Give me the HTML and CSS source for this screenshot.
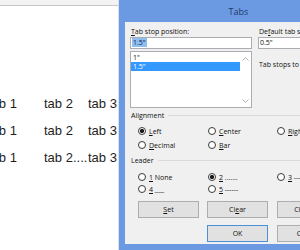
FILE: index.html
```html
<!DOCTYPE html>
<html>
<head>
<meta charset="utf-8">
<link rel="stylesheet" href="styles.css">
</head>
<body>
<div class="screen">
  <div class="doc">
    <div class="ruler"></div>
    <div class="lines">
      <div class="line"><span>tab 1</span><span>tab 2</span><span>tab 3</span></div>
      <div class="line"><span>tab 1</span><span>tab 2</span><span>tab 3</span></div>
      <div class="line"><span>tab 1</span><span>tab 2....</span><span>tab 3<span class="caret"></span></span></div>
    </div>
  </div>
  <div class="dialog">
    <div class="titlebar">Tabs</div>
    <div class="panel">
      <div class="top">
        <div class="col-left">
          <div class="label"><u>T</u>ab stop position:</div>
          <div class="input"><span class="sel">1.5"</span></div>
          <div class="listbox">
            <div class="list">
              <div class="item">1"</div>
              <div class="item active">1.5"</div>
            </div>
            <div class="scroll">
              <svg width="7" height="4" viewBox="0 0 7 4"><path d="M0.5 3.5 L3.5 0.5 L6.5 3.5" fill="none" stroke="#b0b0b0" stroke-width="1"/></svg>
              <svg width="7" height="4" viewBox="0 0 7 4"><path d="M0.5 0.5 L3.5 3.5 L6.5 0.5" fill="none" stroke="#b0b0b0" stroke-width="1"/></svg>
            </div>
          </div>
        </div>
        <div class="col-right">
          <div class="label">De<u>f</u>ault tab stops:</div>
          <div class="input">0.5"</div>
          <div class="note">Tab stops to be cleared:</div>
        </div>
      </div>
      <div class="group-title">Alignment</div>
      <div class="radios align">
        <div class="radio"><span class="dot on"></span><span><u>L</u>eft</span></div>
        <div class="radio"><span class="dot"></span><span><u>C</u>enter</span></div>
        <div class="radio"><span class="dot"></span><span><u>R</u>ight</span></div>
        <div class="radio"><span class="dot"></span><span><u>D</u>ecimal</span></div>
        <div class="radio"><span class="dot"></span><span><u>B</u>ar</span></div>
      </div>
      <div class="group-title leader-title">Leader</div>
      <div class="radios leader">
        <div class="radio"><span class="dot"></span><span><u>1</u> None</span></div>
        <div class="radio"><span class="dot on"></span><span><u>2</u> .......</span></div>
        <div class="radio"><span class="dot"></span><span><u>3</u> -------</span></div>
        <div class="radio"><span class="dot"></span><span><u>4</u> ___</span></div>
        <div class="radio"><span class="dot"></span><span><u>5</u> ------</span></div>
      </div>
      <div class="buttons">
        <div class="btn"><span><u>S</u>et</span></div>
        <div class="btn"><span>Cl<u>e</u>ar</span></div>
        <div class="btn"><span>Clear <u>A</u>ll</span></div>
        <div class="spacer"></div>
        <div class="btn default"><span>OK</span></div>
        <div class="btn"><span>Cancel</span></div>
      </div>
    </div>
  </div>
</div>
</body>
</html>
```
FILE: styles.css
```css
* { box-sizing: border-box; margin: 0; padding: 0; }
html, body { width: 300px; height: 250px; overflow: hidden; background: #fff; }
.screen { display: flex; width: 300px; height: 250px; overflow: hidden; }

.doc {
  flex: 0 0 119px;
  background: #fff;
  border-right: 1px solid #d6e0ee;
  font-family: "Liberation Sans", Arial, sans-serif;
  font-size: 13px;
  color: #1e1e1e;
  overflow: hidden;
}
.ruler { height: 6px; background: #f3f3f3; border-bottom: 1px solid #c6c6c6; }
.lines { padding-top: 84px; margin-left: -12px; }
.line {
  display: grid;
  grid-template-columns: 56px 44px auto;
  height: 27px;
  line-height: 27px;
  white-space: nowrap;
}
.caret {
  display: inline-block;
  width: 1px;
  height: 14px;
  margin-left: 1px;
  background: #707070;
  vertical-align: middle;
}

.dialog {
  flex: 0 0 230px;
  background: #6b9ae3;
  padding: 0 6px 6px;
  display: flex;
  flex-direction: column;
  font-family: "Open Sans", "Noto Sans", sans-serif;
  font-size: 7px;
  color: #111;
}
.titlebar {
  height: 22px;
  display: flex;
  align-items: center;
  justify-content: center;
  font-size: 9px;
  color: #1f3a66;
}
.panel {
  flex: 1;
  background: #f0f0f0;
  padding: 5px 5px 0;
}
.top { display: flex; gap: 6px; }
.col-left { width: 122px; flex: none; }
.col-right { flex: 1; min-width: 0; }
.label { height: 10px; line-height: 10px; padding-left: 1px; white-space: nowrap; }
.input {
  height: 12px;
  border: 1px solid #abadb3;
  background: #fff;
  line-height: 10px;
  padding-left: 1px;
  white-space: nowrap;
}
.sel { background: #8ebdf0; color: #0f2550; padding: 0 1px; }
.listbox {
  margin-top: 2px;
  height: 57px;
  border: 1px solid #abadb3;
  background: #fff;
  display: flex;
}
.list { flex: 1; padding-top: 1px; }
.item { height: 9px; line-height: 9px; padding-left: 2px; }
.item.active { background: #3399ff; color: #fff; }
.scroll {
  width: 11px;
  flex: none;
  display: flex;
  flex-direction: column;
  justify-content: space-between;
  align-items: center;
  padding: 5px 0 4px;
}
.note { margin-top: 11px; line-height: 10px; padding-left: 1px; white-space: nowrap; }

.group-title {
  display: flex;
  align-items: center;
  height: 10px;
  line-height: 10px;
  margin-top: 3px;
  padding-left: 1px;
  white-space: nowrap;
}
.group-title::after {
  content: "";
  flex: 1;
  height: 1px;
  margin-left: 4px;
  margin-top: -2px;
  background: #dadada;
}
.leader-title { margin-top: 4px; }

.radios {
  display: grid;
  grid-template-columns: 70px 69px auto;
  padding-left: 8px;
  white-space: nowrap;
}
.radios.align { grid-auto-rows: 14px; margin-top: 3px; }
.radios.leader { grid-auto-rows: 12px; margin-top: 5px; }
.radio { display: flex; align-items: center; gap: 3px; }
.dot {
  width: 8px;
  height: 8px;
  flex: none;
  border: 1px solid #3a3a3a;
  border-radius: 50%;
  background: #fff;
}
.dot.on { background: radial-gradient(circle, #1a1a1a 0 1.8px, #fff 2.4px); }

.buttons {
  display: grid;
  grid-template-columns: 69px 70px 70px;
  grid-auto-rows: 17px;
  row-gap: 7px;
  margin-top: 6px;
  padding-left: 8px;
}
.btn {
  width: 61px;
  height: 17px;
  border: 1px solid #adadad;
  background: #e1e1e1;
  display: flex;
  align-items: center;
  justify-content: center;
  white-space: nowrap;
}
.btn.default { border-color: #4a90d6; }
```
